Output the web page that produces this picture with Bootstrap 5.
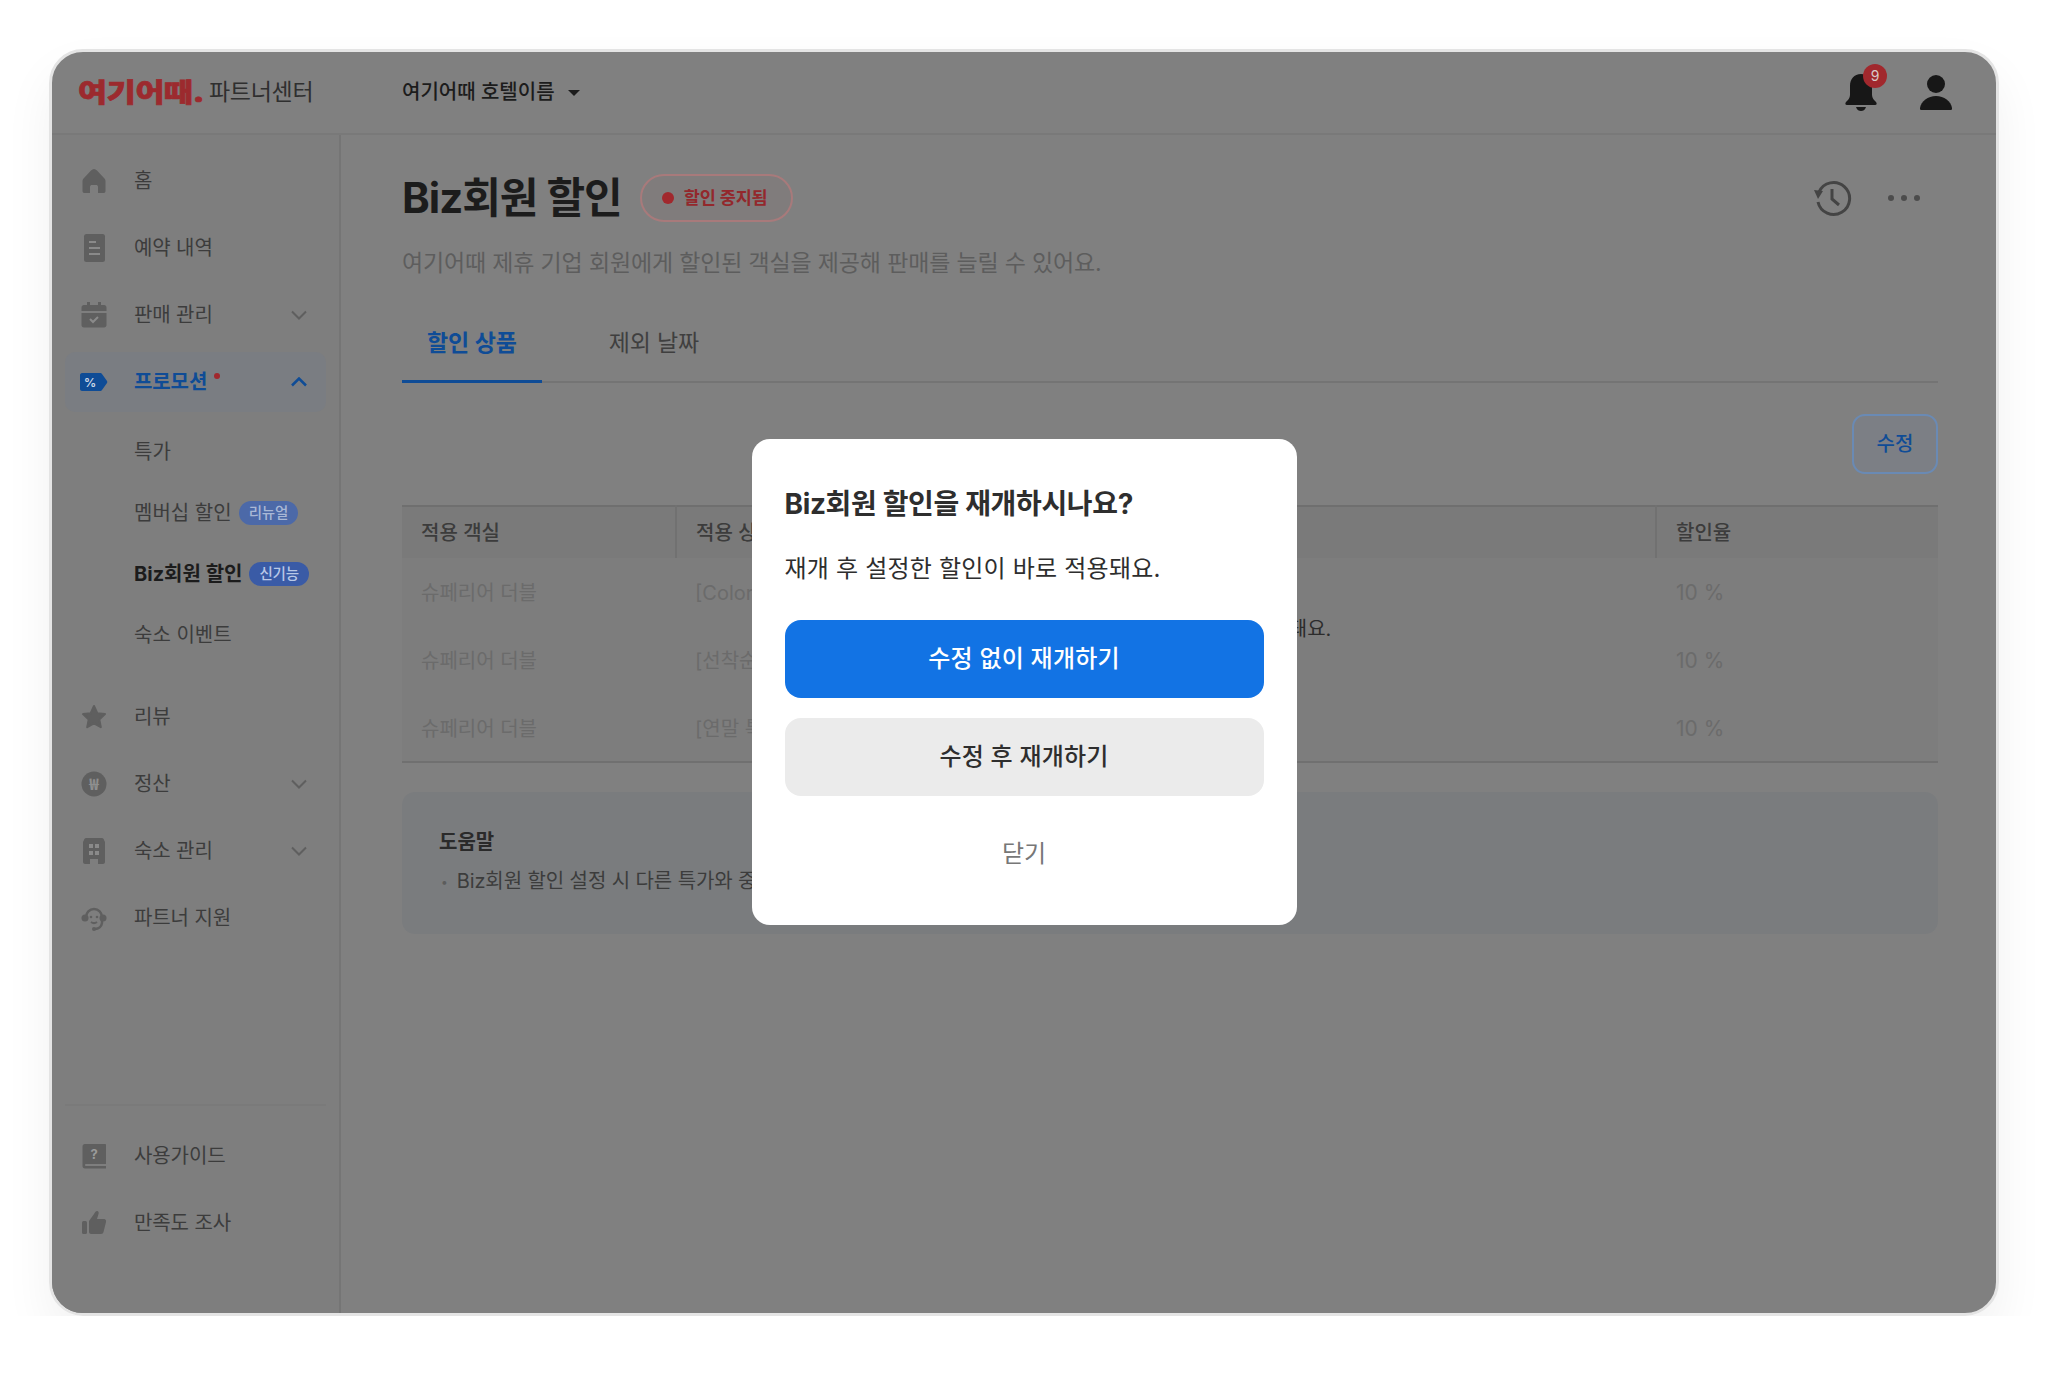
<!DOCTYPE html>
<html lang="ko">
<head>
<meta charset="UTF-8">
<title>Biz회원 할인</title>
<link href="https://cdn.jsdelivr.net/npm/bootstrap@5.3.3/dist/css/bootstrap.min.css" rel="stylesheet">
<style>
    body { background: #fff; margin: 0; padding: 49px 49px 0; font-family: Inter, "Noto Sans CJK KR", sans-serif; color: #333; }
    .app-window { position: relative; width: 1950px; height: 1267px; background: #808080; border: 3px solid #e4e4e4; border-radius: 34px; overflow: hidden; }
    .app-shadow { border-radius: 34px; box-shadow: 0 24px 50px rgba(0,0,0,.06); width: 1950px; }
    .top-bar { height: 83px; border-bottom: 2px solid #797979; padding: 0 26px; flex: none; }
    .logo-mark { display: inline-block; font-size: 26px; font-weight: 900; color: #9c2a2e; -webkit-text-stroke: .7px #9c2a2e; line-height: 1; transform: scaleX(1.21); transform-origin: left center; width: 122px; letter-spacing: -.2px; white-space: nowrap; }
    .logo-sub { font-size: 23px; color: #2f2f2f; margin-left: 9px; letter-spacing: -.3px; }
    .brand-box { width: 324px; }
    .hotel-pick { font-size: 20px; font-weight: 500; color: #1c1c1c; margin-top: -2px; }
    .hotel-pick.dropdown-toggle::after { margin-left: 13px; vertical-align: 3px; }
    .bell-wrap { position: relative; width: 40px; height: 40px; margin-right: 39px; }
    .bell-count { position: absolute; top: -9px; left: 22px; width: 24px; height: 24px; border-radius: 50%; background: #a1282d; color: #d8c8c8; font-size: 14px; line-height: 24px; text-align: center; }
    .user-ico { margin-right: 18px; }
    .side-col { width: 289px; flex: none; border-right: 2px solid #757575; background: #7e7e7e; padding: 16px 13px 0; }
    .side-row { height: 60px; margin-bottom: 7px; padding: 0 19px 0 15px; font-size: 20px; color: #3c3c3c; border-radius: 10px; letter-spacing: -.1px; }
    .side-row .ico { width: 28px; height: 28px; margin-right: 26px; flex: none; }
    .side-row .chev { margin-left: auto; flex: none; }
    .side-row.is-open { background: #7a7d82; color: #0f4c96; font-weight: 600; }
    .new-dot { width: 6px; height: 6px; border-radius: 50%; background: #a1282d; margin: -12px 0 0 7px; }
    .sub-list { margin: 2px 0 22px; }
    .sub-row { height: 61px; padding-left: 69px; font-size: 20px; color: #3c3c3c; }
    .sub-row.is-current { font-weight: 700; color: #1c1c1c; }
    .mini-tag { font-size: 14.500px; line-height: 24px; height: 24px; padding: 0 10px; border-radius: 12px; margin-left: 7px; background: #4c69a8; color: #a9b8d6; font-weight: 500; letter-spacing: -.2px; }
    .mini-tag.strong { background: #3a5ba6; color: #b9c8e6; }
    .side-foot { margin-top: auto; border-top: 2px solid #7a7a7a; padding-top: 20px; margin-bottom: 53px; }
    .main-col { padding: 33px 58px 0 61px; min-width: 0; }
    .page-title { font-size: 42px; font-weight: 700; color: #1c1c1c; line-height: 60px; margin: 0 18px 0 0; letter-spacing: -1px; }
    .state-pill { height: 48px; width: 153px; border: 2px solid #a87a7b; border-radius: 24px; font-size: 17.500px; color: #93282c; background: #807c7c; font-weight: 600; padding-left: 20px; letter-spacing: -.2px; }
    .state-pill i { width: 12px; height: 12px; border-radius: 50%; background: #a1282d; margin-right: 10px; }
    .page-desc { font-size: 23px; color: #5d5d5d; line-height: 34px; margin: 18px 0 21px; letter-spacing: -.16px; }
    .tab-line { border-bottom: 2px solid #747474; height: 82px; }
    .tab-item { padding: 0 25px; font-size: 23px; color: #3f3f3f; height: 82px; line-height: 84px; margin-right: 42px; letter-spacing: -.15px; }
    .tab-item.on { color: #0f4c96; font-weight: 600; border-bottom: 3px solid #0f4c96; }
    .edit-btn { display: block; width: 86px; height: 60px; margin: 31px 0 31px auto; padding: 0; border: 2px solid #6a8ab4; background: #7c7f85; color: #0f4c96; font-size: 20px; font-weight: 500; border-radius: 13px; }
    .table-box { position: relative; }
    .rate-table { table-layout: fixed; margin: 0; --bs-table-bg: transparent; --bs-table-color: #6b6b6b; border-top: 2px solid #6f6f6f; border-bottom: 2px solid #707070; background: #7d7d7d; }
    .rate-table th { height: 52px; background: #7a7a7a; font-size: 20px; color: #3c3c3c; font-weight: 500; padding: 0 19px; border: 0; vertical-align: middle; position: relative; }
    .rate-table th + th { border-left: 2px solid #717171; }
    .rate-table td { height: 68px; font-size: 20px; padding: 2px 19px 0; border: 0; vertical-align: middle; white-space: nowrap; overflow: hidden; color: #6b6b6b; }
    .rate-table td:last-child { font-size: 21px; padding-left: 20px; }
    .table-note { position: absolute; top: 109px; left: 0; right: 0; text-align: center; font-size: 20px; color: #2c2c2c; margin: 0; }
    .help-box { margin-top: 29px; height: 142px; background: #7a7c7e; border-radius: 13px; padding: 33px 37px; font-size: 20px; color: #3c3c3c; }
    .help-box h6 { font-size: 20px; font-weight: 700; color: #2a2a2a; line-height: 34px; margin: 0 0 5px; }
    .help-box p { margin: 0; line-height: 34px; letter-spacing: -.1px; }
    .help-box p::before { content: "•"; font-size: 12px; color: #5c5c5c; margin: 0 9px 0 2px; vertical-align: 2px; }
    .dim-layer { position: absolute; inset: 0; z-index: 5; }
    .resume-modal { width: 545px; height: 486px; border: 0; border-radius: 18px; padding: 33px; background: #fff; flex: none; margin-top: -2px; }
    .resume-modal h5 { font-size: 28px; font-weight: 700; color: #2e2e2e; line-height: 40px; margin: 12px 0 27px; letter-spacing: -.35px; }
    .resume-modal p { font-size: 24px; color: #2e2e2e; line-height: 36px; margin: 0 0 33px; letter-spacing: .2px; }
    .act-btn { height: 78px; border: 0; border-radius: 16px; font-size: 24px; font-weight: 500; margin-bottom: 20px; letter-spacing: .2px; }
    .act-btn.go { background: #1273e4; color: #fff; }
    .act-btn.alt { background: #ebebeb; color: #2e2e2e; }
    .close-link { font-size: 24px; color: #777; text-align: center; background: none; border: 0; margin-top: 20px; padding: 0; line-height: 36px; }
</style>
</head>
<body>
<div class="app-shadow">
<div class="app-window d-flex flex-column">

    <!-- 상단 바 -->
    <header class="top-bar d-flex align-items-center">
        <div class="brand-box d-flex align-items-center">
            <span class="logo-mark">여기어때.</span>
            <span class="logo-sub">파트너센터</span>
        </div>
        <span class="hotel-pick dropdown-toggle">여기어때 호텔이름</span>
        <div class="ms-auto d-flex align-items-center">
            <div class="bell-wrap">
                <svg width="40" height="40" viewBox="0 0 40 40"><path fill="#171717" d="M20 1c-7 0-11 5-11 12v9c0 3-2 5-4 7-1 1-1 3 1 3h28c2 0 2-2 1-3-2-2-4-4-4-7v-9c0-7-4-12-11-12z"/><path fill="#171717" d="M15 34h10c-1 3-3 4-5 4s-4-1-5-4z"/></svg>
                <span class="bell-count">9</span>
            </div>
            <svg class="user-ico" width="32" height="36" viewBox="0 0 32 36"><circle cx="16" cy="9" r="9" fill="#171717"/><path fill="#171717" d="M1 35c-1 0-1-1-1-2 1-7 8-12 16-12s15 5 16 12c0 1 0 2-1 2z"/></svg>
        </div>
    </header>

    <div class="d-flex flex-grow-1" style="min-height:0">
        <!-- 사이드 메뉴 -->
        <aside class="side-col d-flex flex-column">
            <div class="side-row d-flex align-items-center">
                <svg class="ico" viewBox="0 0 28 28"><path fill="#5f5f5f" d="M14 2c-1 0-2 .5-3 1.500L4 11c-1 1-1.500 2-1.500 3.500V24c0 1.500 1 2 2 2H10v-6c0-1.500 1-2 2-2h4c1 0 2 .5 2 2v6h5.500c1 0 2-.5 2-2v-9.500c0-1.500-.5-2.500-1.500-3.500l-7-7.500C16 2.500 15 2 14 2z"/></svg>
                <span>홈</span>
            </div>
            <div class="side-row d-flex align-items-center">
                <svg class="ico" viewBox="0 0 28 28"><rect x="4" y="0" width="21" height="28" rx="2.500" fill="#5f5f5f"/><path stroke="#8a8a8a" stroke-width="2" d="M9 8h7M9 14h11M9 20h11"/></svg>
                <span>예약 내역</span>
            </div>
            <div class="side-row d-flex align-items-center">
                <svg class="ico" viewBox="0 0 28 28"><path fill="#5f5f5f" d="M7 1h3v3h8V1h3v3h3c1.500 0 2.500 1 2.500 2.500V10h-25V6.500C1.500 5 2.500 4 4 4h3zM1.500 12h25v12c0 1.500-1 2.500-2.500 2.500H4c-1.500 0-2.500-1-2.500-2.500z"/><path fill="none" stroke="#8a8a8a" stroke-width="2" d="M10 18l3 3 5-5"/></svg>
                <span>판매 관리</span>
                <svg class="chev" width="16" height="10" viewBox="0 0 16 10"><path fill="none" stroke="#5f5f5f" stroke-width="2" d="M1 1.500l7 7 7-7"/></svg>
            </div>
            <div class="side-row is-open d-flex align-items-center">
                <svg class="ico" viewBox="0 0 28 28"><path fill="#0f4c96" d="M2 5h18c1 0 1.500.3 2 1l5 7c.4.6.4 1.400 0 2l-5 7c-.5.7-1 1-2 1H2c-1 0-2-1-2-2V7c0-1 1-2 2-2z"/><text x="10" y="19" font-size="12" font-weight="700" fill="#c8d4e4" text-anchor="middle" font-family="Inter, sans-serif">%</text></svg>
                <span>프로모션</span><i class="new-dot"></i>
                <svg class="chev" width="16" height="10" viewBox="0 0 16 10"><path fill="none" stroke="#0f4c96" stroke-width="2.500" d="M1 8.500l7-7 7 7"/></svg>
            </div>
            <div class="sub-list">
                <div class="sub-row d-flex align-items-center">특가</div>
                <div class="sub-row d-flex align-items-center">멤버십 할인<span class="mini-tag">리뉴얼</span></div>
                <div class="sub-row is-current d-flex align-items-center">Biz회원 할인<span class="mini-tag strong">신기능</span></div>
                <div class="sub-row d-flex align-items-center">숙소 이벤트</div>
            </div>
            <div class="side-row d-flex align-items-center">
                <svg class="ico" viewBox="0 0 28 28"><path fill="#5f5f5f" stroke="#5f5f5f" stroke-width="2" stroke-linejoin="round" d="M14 3l3.300 7.200 7.700.9-5.700 5.300 1.500 7.800-6.800-3.900-6.800 3.900 1.500-7.800L3 11.100l7.700-.9z"/></svg>
                <span>리뷰</span>
            </div>
            <div class="side-row d-flex align-items-center">
                <svg class="ico" viewBox="0 0 28 28"><circle cx="14" cy="14" r="12.500" fill="#5f5f5f"/><text x="14" y="20" font-size="16" font-weight="700" fill="#8f8f8f" text-anchor="middle" font-family="'Noto Sans CJK KR', sans-serif">₩</text></svg>
                <span>정산</span>
                <svg class="chev" width="16" height="10" viewBox="0 0 16 10"><path fill="none" stroke="#5f5f5f" stroke-width="2" d="M1 1.500l7 7 7-7"/></svg>
            </div>
            <div class="side-row d-flex align-items-center">
                <svg class="ico" viewBox="0 0 28 28"><path fill="#5f5f5f" d="M6 1h16c1 0 2 1 2 2l1 2v20c0 1-1 2-2 2h-5v-5h-8v5H5c-1 0-2-1-2-2V5l1-2c0-1 1-2 2-2z"/><path fill="#8a8a8a" d="M9 7h4v4H9zM15 7h4v4h-4zM9 14h4v4H9zM15 14h4v4h-4z"/></svg>
                <span>숙소 관리</span>
                <svg class="chev" width="16" height="10" viewBox="0 0 16 10"><path fill="none" stroke="#5f5f5f" stroke-width="2" d="M1 1.500l7 7 7-7"/></svg>
            </div>
            <div class="side-row d-flex align-items-center">
                <svg class="ico" viewBox="0 0 28 28"><path fill="none" stroke="#5f5f5f" stroke-width="2.500" d="M6 13a8 8 0 0 1 16 0v6a7 7 0 0 1-7 6"/><circle cx="5" cy="14" r="3.500" fill="#5f5f5f"/><circle cx="23" cy="14" r="3.500" fill="#5f5f5f"/><circle cx="11" cy="13" r="1.300" fill="#5f5f5f"/><circle cx="17" cy="13" r="1.300" fill="#5f5f5f"/><path fill="none" stroke="#5f5f5f" stroke-width="2" d="M11 18c2 1.500 4 1.500 6 0"/><circle cx="14" cy="25" r="2" fill="#5f5f5f"/></svg>
                <span>파트너 지원</span>
            </div>
            <div class="side-foot">
                <div class="side-row d-flex align-items-center">
                    <svg class="ico" viewBox="0 0 28 28"><path fill="#5f5f5f" d="M5 2h20c.6 0 1 .4 1 1v19H6c-1.500 0-1.500 2 0 2h20v2.500H5c-1.500 0-2.500-1-2.500-2.500V4.500C2.500 3 3.500 2 5 2z"/><text x="14" y="17" font-size="13" font-weight="700" fill="#9a9a9a" text-anchor="middle" font-family="Inter, sans-serif">?</text></svg>
                    <span>사용가이드</span>
                </div>
                <div class="side-row d-flex align-items-center">
                    <svg class="ico" viewBox="0 0 28 28"><rect x="2" y="12" width="5" height="13" rx="1.500" fill="#5f5f5f"/><path fill="#5f5f5f" d="M9 12l5-7c1-2 2-3 3-3 1.500 0 2 1.500 1.500 3L17 10h7c1.500 0 2.500 1.500 2 3l-2.500 10c-.3 1.300-1 2-2.500 2H11c-1 0-2-1-2-2z"/></svg>
                    <span>만족도 조사</span>
                </div>
            </div>
        </aside>

        <!-- 본문 -->
        <main class="main-col flex-grow-1">
            <div class="d-flex align-items-center">
                <h1 class="page-title">Biz회원 할인</h1>
                <span class="state-pill d-inline-flex align-items-center"><i></i>할인 중지됨</span>
                <div class="ms-auto d-flex align-items-center">
                    <svg width="40" height="40" viewBox="0 0 40 40"><path fill="none" stroke="#444" stroke-width="3" d="M7 14a16 16 0 1 1-1 10"/><path fill="#444" d="M2 12l9 1-5 8z"/><path fill="none" stroke="#444" stroke-width="3" d="M20 11v10l7 6"/></svg>
                    <svg class="more-ico" width="36" height="8" viewBox="0 0 36 8" style="margin:0 16px 0 34px"><circle cx="5" cy="4" r="3" fill="#4c4c4c"/><circle cx="18" cy="4" r="3" fill="#4c4c4c"/><circle cx="31" cy="4" r="3" fill="#4c4c4c"/></svg>
                </div>
            </div>
            <p class="page-desc">여기어때 제휴 기업 회원에게 할인된 객실을 제공해 판매를 늘릴 수 있어요.</p>

            <nav class="tab-line d-flex">
                <span class="tab-item on">할인 상품</span>
                <span class="tab-item">제외 날짜</span>
            </nav>

            <button class="btn edit-btn" type="button">수정</button>

            <div class="table-box">
                <table class="table rate-table">
                    <colgroup><col style="width:274px"><col style="width:980px"><col style="width:282px"></colgroup>
                    <thead>
                        <tr><th>적용 객실</th><th>적용 상품</th><th>할인율</th></tr>
                    </thead>
                    <tbody>
                        <tr><td>슈페리어 더블</td><td>[Color 특가] 여름 숙박</td><td>10 %</td></tr>
                        <tr><td>슈페리어 더블</td><td>[선착순 특가] 숙박</td><td>10 %</td></tr>
                        <tr><td>슈페리어 더블</td><td>[연말 특가] 숙박</td><td>10 %</td></tr>
                    </tbody>
                </table>
                <p class="table-note">할인을 재개하면 할인이 다시 적용돼요.</p>
            </div>

            <section class="help-box">
                <h6>도움말</h6>
                <p>Biz회원 할인 설정 시 다른 특가와 중복 적용될 수 있어요.</p>
            </section>
        </main>
    </div>

    <!-- 재개 확인 -->
    <div class="dim-layer d-flex align-items-center justify-content-center">
        <div class="modal-content resume-modal">
            <h5>Biz회원 할인을 재개하시나요?</h5>
            <p>재개 후 설정한 할인이 바로 적용돼요.</p>
            <button class="btn act-btn go w-100" type="button">수정 없이 재개하기</button>
            <button class="btn act-btn alt w-100" type="button">수정 후 재개하기</button>
            <button class="close-link" type="button">닫기</button>
        </div>
    </div>
</div>
</div>
<script src="https://cdn.jsdelivr.net/npm/bootstrap@5.3.3/dist/js/bootstrap.bundle.min.js"></script>
</body>
</html>
